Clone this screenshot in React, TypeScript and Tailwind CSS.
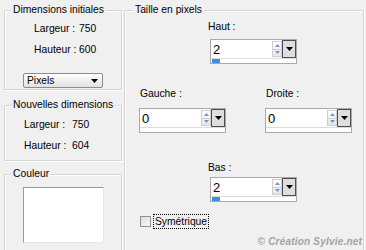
import React from 'react'

function Spin({ value, bar }: { value: string; bar?: boolean }) {
  return (
    <div className="w-[87px] border border-[#a9a9a9] bg-white">
      <div className="flex h-[18px]">
        <span className="flex-1 pl-[2px] text-[13px] leading-[19px]">{value}</span>
        <div className="my-[1px] flex w-[10px] flex-col border border-[#cfcfcf] bg-gradient-to-b from-white to-[#e6e6e6]">
          <div className="flex flex-1 items-center justify-center border-b border-[#cfcfcf]">
            <svg width="5" height="3" viewBox="0 0 5 3">
              <path d="M0 3L2.5 0L5 3Z" fill="#7395d9" />
            </svg>
          </div>
          <div className="flex flex-1 items-center justify-center">
            <svg width="5" height="3" viewBox="0 0 5 3">
              <path d="M0 0H5L2.5 3Z" fill="#7395d9" />
            </svg>
          </div>
        </div>
        <div className="flex w-[14px] items-center justify-center border border-[#4d4d4d] bg-[#dedede]">
          <svg width="7" height="4" viewBox="0 0 7 4">
            <path d="M0 0H7L3.5 4Z" fill="#000" />
          </svg>
        </div>
      </div>
      <div className="h-[5px] border-t border-[#dcdcdc] pl-[1px]">
        {bar && <div className="h-[4px] w-[8px] bg-[#3a8ee8]" />}
      </div>
    </div>
  )
}

export default function App() {
  return (
    <div className="flex h-[250px] w-[366px] overflow-hidden bg-[#f0f0f0] pl-[4px] pt-[4px] font-['Liberation_Sans',Arial,sans-serif] text-[10.3px] leading-[12px] text-black">
      {/* Left column */}
      <div className="flex w-[118px] flex-col">
        <fieldset className="border border-[#d5d5d5] shadow-[1px_1px_0_#fff,inset_1px_1px_0_#fff]">
          <legend className="ml-[6px] bg-[#f0f0f0] px-[2px]">Dimensions initiales</legend>
          <div className="pb-[1px] pt-[7px]">
            <div className="grid grid-cols-[45px_auto] gap-y-[9px] pl-[29px]">
              <span>Largeur :</span>
              <span>750</span>
              <span>Hauteur :</span>
              <span>600</span>
            </div>
            <div className="ml-[18px] mt-[17px] flex h-[15px] w-[80px] items-center justify-between rounded-[2px] border border-[#8c8c8c] bg-gradient-to-b from-white to-[#e2e2e2] pl-[3px] pr-[4px]">
              <span>Pixels</span>
              <svg width="7" height="4" viewBox="0 0 7 4">
                <path d="M0 0H7L3.5 4Z" fill="#000" />
              </svg>
            </div>
          </div>
        </fieldset>

        <fieldset className="mt-[9px] border border-[#d5d5d5] shadow-[1px_1px_0_#fff,inset_1px_1px_0_#fff]">
          <legend className="ml-[6px] bg-[#f0f0f0] px-[2px]">Nouvelles dimensions</legend>
          <div className="grid grid-cols-[48px_auto] gap-y-[9px] pb-[8px] pl-[19px] pt-[8px]">
            <span>Largeur :</span>
            <span>750</span>
            <span>Hauteur :</span>
            <span>604</span>
          </div>
        </fieldset>

        <fieldset className="mt-[7px] border border-[#d5d5d5] shadow-[1px_1px_0_#fff,inset_1px_1px_0_#fff]">
          <legend className="ml-[6px] bg-[#f0f0f0] px-[2px]">Couleur</legend>
          <div className="pb-[20px] pl-[18px] pt-[7px]">
            <div className="h-[56px] w-[81px] border border-b-[#e6e6e6] border-l-[#9a9a9a] border-r-[#e6e6e6] border-t-[#9a9a9a] bg-white" />
          </div>
        </fieldset>
      </div>

      {/* Right group */}
      <fieldset className="ml-[2px] h-[270px] w-[240px] border border-[#d5d5d5] shadow-[1px_1px_0_#fff,inset_1px_1px_0_#fff]">
        <legend className="ml-[8px] bg-[#f0f0f0] px-[2px]">Taille en pixels</legend>
        <div className="flex flex-col pt-[5px]">
          <span className="pl-[83px]">Haut :</span>
          <div className="ml-[85px] mt-[6px]">
            <Spin value="2" bar />
          </div>

          <div className="mt-[24px] flex gap-[39px] pl-[14px]">
            <div>
              <span className="pl-[1px]">Gauche :</span>
              <div className="mt-[8px]">
                <Spin value="0" />
              </div>
            </div>
            <div>
              <span className="pl-[1px]">Droite :</span>
              <div className="mt-[8px]">
                <Spin value="0" />
              </div>
            </div>
          </div>

          <span className="mt-[29px] pl-[83px]">Bas :</span>
          <div className="ml-[85px] mt-[3px]">
            <Spin value="2" bar />
          </div>

          <div className="mt-[12px] flex items-center gap-[2px] pl-[15px]">
            <div className="h-[11px] w-[11px] border border-[#8f8f8f] bg-gradient-to-br from-[#dcdcdc] to-[#f8f8f8]" />
            <span className="border border-dotted border-black px-[1px] leading-[13px]">Symétrique</span>
          </div>

          <div className="mt-[7px] pr-[1px] text-right text-[10px] font-bold italic tracking-[0.2px] text-[#a3a3a3]">
            © Création Sylvie.net
          </div>
        </div>
      </fieldset>
    </div>
  )
}
